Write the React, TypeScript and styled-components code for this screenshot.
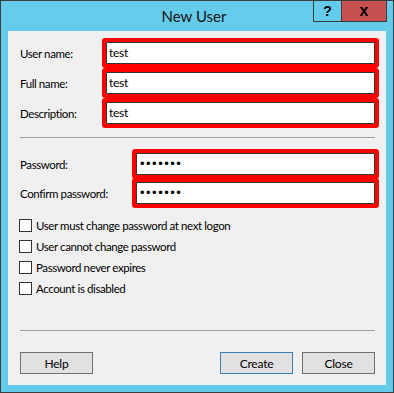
import styled, { createGlobalStyle } from 'styled-components';

const GlobalStyle = createGlobalStyle`
  html, body {
    margin: 0;
    padding: 0;
    background: #ffffff;
  }
  body {
    font-family: Lato, 'Liberation Sans', Arial, sans-serif;
    font-size: 11.5px;
    letter-spacing: -0.4px;
    color: #000;
  }
  * {
    box-sizing: border-box;
  }
`;

const Window = styled.div`
  width: 394px;
  height: 393px;
  border: 1px solid #3c3c3c;
  background: #65cbea;
  display: flex;
  flex-direction: column;
`;

const TitleBar = styled.div`
  height: 30px;
  display: grid;
  grid-template-columns: 1fr auto 1fr;
  align-items: start;
  padding-right: 6px;
`;

const Title = styled.div`
  grid-column: 2;
  align-self: center;
  font-size: 15px;
  letter-spacing: 0;
  color: #111;
`;

const CaptionButtons = styled.div`
  grid-column: 3;
  justify-self: end;
  display: flex;
  height: 21px;
  border: 1px solid #3c3c3c;
  border-top: none;
`;

const CaptionButton = styled.div<{ $close?: boolean }>`
  width: ${(p) => (p.$close ? '44px' : '28px')};
  display: flex;
  align-items: center;
  justify-content: center;
  background: ${(p) => (p.$close ? '#c75050' : 'transparent')};
  border-right: ${(p) => (p.$close ? 'none' : '1px solid #3c3c3c')};
  font-family: 'Liberation Sans', Arial, sans-serif;
  font-weight: bold;
  font-size: ${(p) => (p.$close ? '16px' : '14px')};
  letter-spacing: 0;
  line-height: 1;
  color: #000;
`;

const Frame = styled.div`
  flex: 1;
  padding: 0 7px 7px 7px;
  display: flex;
`;

const Client = styled.div`
  flex: 1;
  background: #f0f0f0;
  padding: 11px 11px 11px 12px;
  display: flex;
  flex-direction: column;
`;

const FieldGroup = styled.div<{ $gap: number }>`
  display: flex;
  flex-direction: column;
  gap: ${(p) => p.$gap}px;
`;

const FieldRow = styled.div<{ $labelWidth: number }>`
  display: grid;
  grid-template-columns: ${(p) => p.$labelWidth}px 1fr;
  align-items: center;
`;

const Label = styled.label``;

const TextBox = styled.input`
  height: 22px;
  width: 100%;
  border: 1px solid #333;
  border-radius: 1px;
  background: #fff;
  padding: 0 2px 1px;
  font-family: inherit;
  font-size: 12px;
  letter-spacing: -0.3px;
  color: #000;
  outline: none;
  box-shadow: 0 0 0 4px #ff0000;
`;

const PasswordBox = styled(TextBox)`
  font-family: 'Liberation Sans', Arial, sans-serif;
  letter-spacing: 1.5px;
  font-size: 13px;
  padding-left: 3px;
`;

const Separator = styled.hr<{ $top: number; $bottom: number }>`
  border: none;
  border-top: 1px solid #a0a0a0;
  margin: ${(p) => p.$top}px 0 ${(p) => p.$bottom}px;
  width: 355px;
`;

const Options = styled.div`
  display: flex;
  flex-direction: column;
  gap: 8px;
  margin-top: 15px;
  margin-left: -1px;
`;

const Option = styled.label`
  display: flex;
  align-items: center;
  gap: 4px;
  height: 13px;
`;

const Box = styled.span`
  width: 13px;
  height: 13px;
  border: 1px solid #333;
  background: #fff;
  flex: none;
`;

const Spacer = styled.div`
  flex: 1;
`;

const ButtonBar = styled.div`
  display: flex;
  gap: 9px;
`;

const Button = styled.button<{ $focused?: boolean }>`
  width: 73px;
  height: 22px;
  background: #e1e1e1;
  border: 1px solid ${(p) => (p.$focused ? '#3c7fb1' : '#707070')};
  border-radius: 0;
  font-family: inherit;
  font-size: 12px;
  letter-spacing: -0.2px;
  color: #000;
  padding: 0;
`;

const options = [
  'User must change password at next logon',
  'User cannot change password',
  'Password never expires',
  'Account is disabled',
];

export default function App() {
  return (
    <>
      <GlobalStyle />
      <Window>
        <TitleBar>
          <Title>New User</Title>
          <CaptionButtons>
            <CaptionButton>?</CaptionButton>
            <CaptionButton $close>x</CaptionButton>
          </CaptionButtons>
        </TitleBar>
        <Frame>
          <Client>
            <FieldGroup $gap={8}>
              <FieldRow $labelWidth={86}>
                <Label>User name:</Label>
                <TextBox defaultValue='test' />
              </FieldRow>
              <FieldRow $labelWidth={86}>
                <Label>Full name:</Label>
                <TextBox defaultValue='test' />
              </FieldRow>
              <FieldRow $labelWidth={86}>
                <Label>Description:</Label>
                <TextBox defaultValue='test' />
              </FieldRow>
            </FieldGroup>
            <Separator $top={13} $bottom={15} />
            <FieldGroup $gap={7}>
              <FieldRow $labelWidth={116}>
                <Label>Password:</Label>
                <PasswordBox type='password' defaultValue='1234567' />
              </FieldRow>
              <FieldRow $labelWidth={116}>
                <Label>Confirm password:</Label>
                <PasswordBox type='password' defaultValue='1234567' />
              </FieldRow>
            </FieldGroup>
            <Options>
              {options.map((o) => (
                <Option key={o}>
                  <Box />
                  {o}
                </Option>
              ))}
            </Options>
            <Spacer />
            <Separator $top={0} $bottom={21} />
            <ButtonBar>
              <Button>Help</Button>
              <Spacer />
              <Button $focused>Create</Button>
              <Button>Close</Button>
            </ButtonBar>
          </Client>
        </Frame>
      </Window>
    </>
  );
}
